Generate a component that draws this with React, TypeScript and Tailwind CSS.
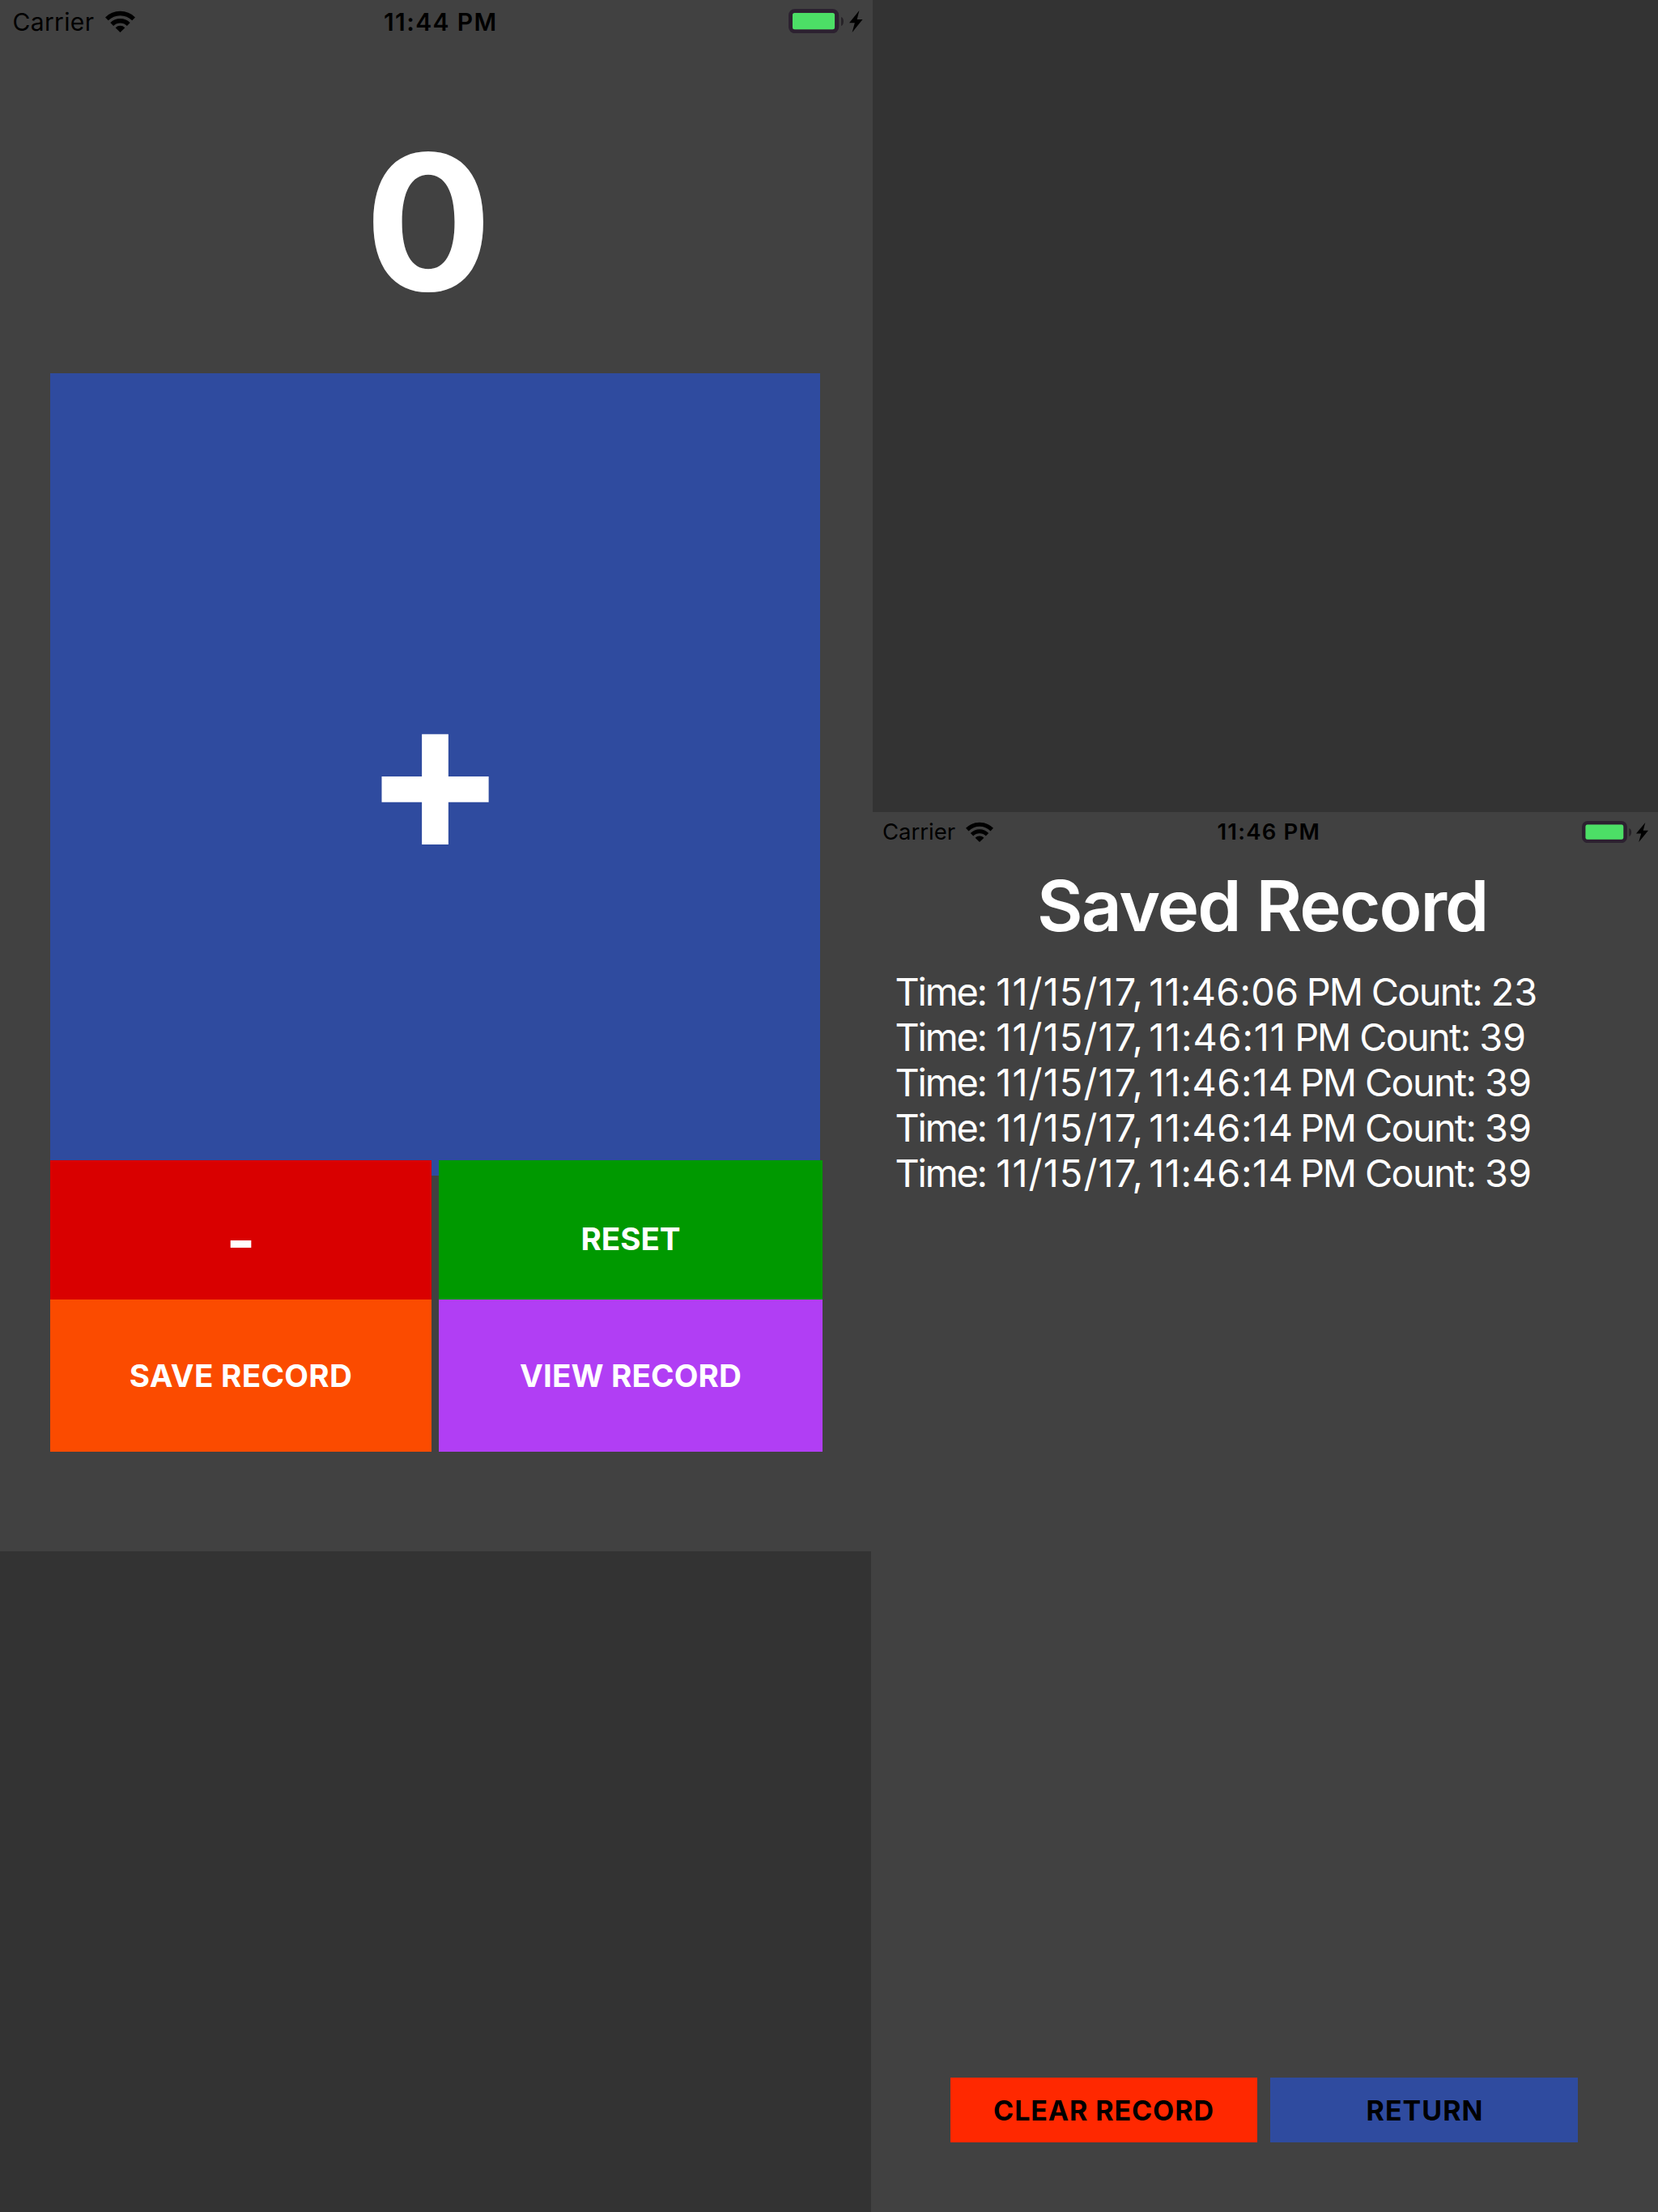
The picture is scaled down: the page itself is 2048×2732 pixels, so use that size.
function Wifi({ className }: { className: string }) {
  return (
    <svg viewBox="0 0 37 27" preserveAspectRatio="none" className={className}>
      <g fill="none" stroke="#000" strokeWidth="5.4">
        <path d="M1.9 10.4 A23.6 23.6 0 0 1 35.1 10.4" />
        <path d="M8.2 17 A14.6 14.6 0 0 1 28.8 17" />
      </g>
      <path d="M18.5 27 L12.6 21.2 A8.4 8.4 0 0 1 24.4 21.2 Z" fill="#000" />
    </svg>
  );
}

function Battery({ className }: { className: string }) {
  return (
    <svg viewBox="0 0 69 30" preserveAspectRatio="none" className={className}>
      <rect x="2.4" y="2.4" width="57.4" height="25.4" rx="5.5" fill="none" stroke="#2c2130" strokeWidth="4.8" />
      <rect x="5" y="5" width="52" height="20.2" rx="2.5" fill="#4cdf66" />
      <path d="M65 10 C69 11 69 20 65 21 Z" fill="#252126" />
    </svg>
  );
}

function Bolt({ className }: { className: string }) {
  return (
    <svg viewBox="0 0 16.5 27" preserveAspectRatio="none" className={className}>
      <path d="M12.4 0 L0 15.2 H6.8 L3.6 27 L16.5 10.9 H9.6 Z" fill="#000" />
    </svg>
  );
}

type Entry = { time: string; timeClass: string; count: string };

const ENTRIES: Entry[] = [
  { time: "11:46:06", timeClass: "w-[194.6px] tracking-[0.3px]", count: "23" },
  { time: "11:46:11", timeClass: "w-[180px] tracking-[0.9px]", count: "39" },
  { time: "11:46:14", timeClass: "w-[186.8px] tracking-[0.6px]", count: "39" },
  { time: "11:46:14", timeClass: "w-[186.8px] tracking-[0.6px]", count: "39" },
  { time: "11:46:14", timeClass: "w-[186.8px] tracking-[0.6px]", count: "39" },
];

function Record({ time, timeClass, count }: Entry) {
  return (
    <li className="flex h-14 items-center text-[46.8px] leading-[56px] whitespace-nowrap">
      <span className="w-[124.7px] tracking-[-2.2px]">Time:</span>
      <span className="w-[189px] tracking-[1.17px]">11/15/17,</span>
      <span className={timeClass}>{time}</span>
      <span className="w-20 tracking-[-2px]">PM</span>
      <span className="w-[148px] tracking-[-1.67px]">Count:</span>
      <span>{count}</span>
    </li>
  );
}

export default function App() {
  return (
    <div className="flex h-[2732px] w-[2048px] overflow-hidden bg-[#333333] font-['Inter',sans-serif] text-white">
      <div className="w-[1076px] shrink-0">
        <section className="relative z-10 h-[1916px] w-[1078px] bg-[#414141]">
          <header className="flex h-[54px] items-center text-[30px] text-black">
            <span className="ml-[15.5px] w-[114.5px] tracking-[0.36px]">Carrier</span>
            <Wifi className="mb-[2px] h-[27px] w-[37px]" />
            <span className="ml-[307px] w-[142px] font-semibold tracking-[1.4px] whitespace-nowrap">11:44 PM</span>
            <Battery className="mb-[2px] ml-[358px] h-[30px] w-[69px]" />
            <Bolt className="mb-px ml-[6px] h-[27px] w-[16.5px]" />
          </header>
          <div className="flex h-[407px] items-center pt-[33px] pl-[450.5px] text-[233px] leading-none font-bold">0</div>
          <div className="mx-[62px] flex h-[991px] w-[951px] items-center justify-center bg-[#2f4b9f] text-[264px] leading-none font-bold">
            <span className="mb-[3px] scale-y-[1.03]">+</span>
          </div>
          <div className="relative -mt-[19px] ml-[62px] grid w-[954px] grid-cols-[471px_474px] grid-rows-[172px_188px] gap-x-[9px] text-[38.6px] font-bold whitespace-nowrap">
            <div className="flex items-center justify-center bg-[#d90000] pt-[26px] text-[77px] leading-none">-</div>
            <div className="flex items-center justify-center bg-[#009900] pt-6">RESET</div>
            <div className="flex items-center justify-center bg-[#fb4b00] pt-[2px] tracking-[0.3px]">SAVE RECORD</div>
            <div className="flex items-center justify-center bg-[#b13ef4] pt-[2px] tracking-[0.14px]">VIEW RECORD</div>
          </div>
        </section>
      </div>
      <div className="flex flex-1 flex-col pt-[1003px]">
        <section className="flex h-[1729px] flex-col bg-[#414141]">
          <header className="flex h-[50px] items-center text-[27.5px] text-black">
            <span className="ml-[14px] w-[102.5px]">Carrier</span>
            <Wifi className="mb-[2px] h-[25px] w-[34px]" />
            <span className="ml-[277px] w-[128px] font-semibold tracking-[1.2px] whitespace-nowrap">11:46 PM</span>
            <Battery className="mb-[2px] ml-[322px] h-[27px] w-[62px]" />
            <Bolt className="ml-[5.5px] h-6 w-[15px]" />
          </header>
          <h1 className="flex h-[131px] items-center pl-[205px] text-[87px] leading-none font-semibold tracking-[-1.95px] whitespace-nowrap">Saved Record</h1>
          <ul className="mt-[13px] ml-[29.5px]">
            {ENTRIES.map((entry, i) => (
              <Record key={i} {...entry} />
            ))}
          </ul>
          <div className="mt-auto mb-[86px] ml-[98px] flex gap-4 text-[34px] font-bold text-black">
            <div className="flex h-20 w-[379px] items-center justify-center bg-[#ff2800] tracking-[0.9px]">CLEAR RECORD</div>
            <div className="flex h-20 w-[380px] items-center justify-center bg-[#2f4b9f] pl-[2px] tracking-[1px]">RETURN</div>
          </div>
        </section>
      </div>
    </div>
  );
}
